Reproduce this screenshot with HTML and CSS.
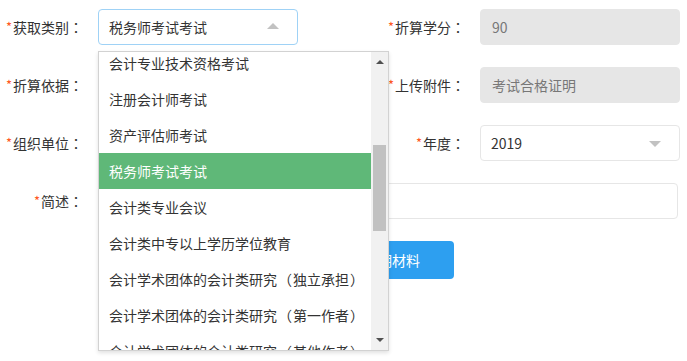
FILE: index.html
```html
<!DOCTYPE html>
<html lang="zh-CN">
<head>
<meta charset="utf-8">
<title>表单</title>
<link rel="stylesheet" href="styles.css">
</head>
<body>
<form class="form">
  <label class="label"><span class="req">*</span>获取类别<span class="punct">：</span></label>
  <div class="select select-open">
    <span class="select-text">税务师考试考试</span>
    <span class="caret caret-up"></span>
  </div>
  <label class="label"><span class="req">*</span>折算学分<span class="punct">：</span></label>
  <div class="input input-disabled">90</div>

  <label class="label"><span class="req">*</span>折算依据<span class="punct">：</span></label>
  <div class="input"></div>
  <label class="label"><span class="req">*</span>上传附件<span class="punct">：</span></label>
  <div class="input input-disabled">考试合格证明</div>

  <label class="label"><span class="req">*</span>组织单位<span class="punct">：</span></label>
  <div class="input"></div>
  <label class="label"><span class="req">*</span>年度<span class="punct">：</span></label>
  <div class="select">
    <span class="select-text">2019</span>
    <span class="caret caret-down"></span>
  </div>

  <label class="label"><span class="req">*</span>简述<span class="punct">：</span></label>
  <div class="input textarea"></div>

  <div class="btn-row">
    <button type="button" class="btn">上传证明材料</button>
  </div>

  <div class="dropdown">
    <div class="dd-list">
      <div class="dd-inner">
        <div class="dd-item">会计专业技术资格考试</div>
        <div class="dd-item">注册会计师考试</div>
        <div class="dd-item">资产评估师考试</div>
        <div class="dd-item active">税务师考试考试</div>
        <div class="dd-item">会计类专业会议</div>
        <div class="dd-item">会计类中专以上学历学位教育</div>
        <div class="dd-item">会计学术团体的会计类研究<span class="paren">（</span>独立承担<span class="paren">）</span></div>
        <div class="dd-item">会计学术团体的会计类研究<span class="paren">（</span>第一作者<span class="paren">）</span></div>
        <div class="dd-item">会计学术团体的会计类研究<span class="paren">（</span>其他作者<span class="paren">）</span></div>
      </div>
    </div>
    <div class="sb">
      <span class="sb-arrow sb-up"></span>
      <span class="sb-thumb"></span>
      <span class="sb-arrow sb-down"></span>
    </div>
  </div>
</form>
</body>
</html>
```

FILE: styles.css
```css
html, body {
  margin: 0;
  padding: 0;
  background: #fff;
  min-height: 361px;
}
body {
  font-family: "Noto Sans CJK SC", "Noto Sans", sans-serif;
  font-size: 14px;
  color: #333;
}
.form {
  position: relative;
  display: grid;
  grid-template-columns: 84px 200px 154px 200px;
  grid-template-rows: repeat(5, 36px);
  align-content: start;
  column-gap: 14px;
  row-gap: 22px;
  padding-top: 9px;
  width: 680px;
  min-height: 352px;
}
.label {
  display: flex;
  align-items: center;
  justify-content: flex-end;
  white-space: nowrap;
  color: #333;
  line-height: 1;
  padding-right: 1px;
}
.punct {
  font-family: "Noto Sans CJK TC", "Noto Sans CJK SC", sans-serif;
}
.paren {
  margin: 0 1px;
}
.req {
  color: #ff5722;
  font-size: 13px;
  margin-right: 1px;
  position: relative;
  top: -1px;
}
.input, .select {
  box-sizing: border-box;
  height: 36px;
  border: 1px solid #e6e6e6;
  border-radius: 4px;
  background: #fff;
  display: flex;
  align-items: center;
  padding-left: 10px;
  color: #333;
}
.input-disabled {
  background: #e6e6e6;
  border-color: #e6e6e6;
  color: #777;
  padding-left: 11px;
}
.textarea {
  grid-column: 2 / 5;
  margin-right: 2px;
}
.select {
  justify-content: space-between;
  padding-right: 18px;
}
.select-open {
  border-color: #9fd2f6;
}
.caret {
  width: 0;
  height: 0;
  border-left: 6px solid transparent;
  border-right: 6px solid transparent;
}
.caret-up {
  border-bottom: 6px solid #c2c2c2;
  margin-top: -2px;
}
.caret-down {
  border-top: 6px solid #c2c2c2;
  margin-top: 1px;
}
.btn-row {
  grid-column: 2 / 5;
  height: 38px;
}
.btn {
  display: block;
  margin-left: 204px;
  width: 152px;
  height: 38px;
  border: 0;
  border-radius: 4px;
  background: #2d9ff0;
  color: #fff;
  font-family: inherit;
  font-size: 14px;
  padding: 0;
}
.dropdown {
  position: absolute;
  left: 98px;
  top: 51px;
  width: 291px;
  height: 300px;
  box-sizing: border-box;
  border: 1px solid #d2d2d2;
  background: #fff;
  box-shadow: 0 2px 4px rgba(0, 0, 0, 0.12);
  display: flex;
  z-index: 10;
}
.dd-list {
  flex: 1;
  overflow: hidden;
}
.dd-inner {
  margin-top: -7px;
}
.dd-item {
  height: 36px;
  line-height: 36px;
  padding-left: 10px;
  white-space: nowrap;
  color: #333;
}
.dd-item.active {
  background: #5fb878;
  color: #fff;
}
.sb {
  width: 17px;
  background: #f1f1f1;
  position: relative;
}
.sb-arrow {
  position: absolute;
  left: 5px;
  width: 0;
  height: 0;
  border-left: 4px solid transparent;
  border-right: 4px solid transparent;
}
.sb-up {
  top: 8px;
  border-bottom: 4px solid #505050;
}
.sb-down {
  bottom: 8px;
  border-top: 4px solid #505050;
}
.sb-thumb {
  position: absolute;
  left: 2px;
  width: 13px;
  top: 93px;
  height: 86px;
  background: #c1c1c1;
}
```
